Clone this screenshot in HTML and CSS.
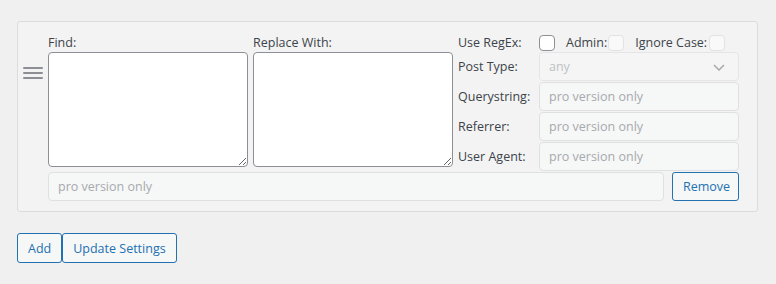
FILE: index.html
```html
<!DOCTYPE html>
<html lang="en">
<head>
    <meta charset="UTF-8">
    <meta name="viewport" content="width=device-width, initial-scale=1.0">
    <title>Rules</title>
    <link rel="stylesheet" href="styles.css">
</head>
<body>
    <div class="wrap">
        <div class="rule">
            <!-- drag handle -->
            <div class="handle">
                <svg width="20" height="12" viewBox="0 0 20 12">
                    <rect x="0" y="0" width="20" height="2" rx="1" fill="#8c8f94"/>
                    <rect x="0" y="5" width="20" height="2" rx="1" fill="#8c8f94"/>
                    <rect x="0" y="10" width="20" height="2" rx="1" fill="#8c8f94"/>
                </svg>
            </div>
            <div class="rule-body">
                <div class="rule-grid">
                    <label class="field-label find-label">Find:</label>
                    <label class="field-label replace-label">Replace With:</label>
                    <span class="side-label regex-label">Use RegEx:</span>
                    <div class="checks">
                        <input type="checkbox" class="check">
                        <span class="check-text admin-text">Admin:</span>
                        <input type="checkbox" class="check" disabled>
                        <span class="check-text case-text">Ignore Case:</span>
                        <input type="checkbox" class="check" disabled>
                    </div>

                    <textarea class="find-box"></textarea>
                    <textarea class="replace-box"></textarea>

                    <span class="side-label">Post Type:</span>
                    <div class="select-wrap">
                        <select disabled><option>any</option></select>
                        <svg class="chevron" width="12" height="7" viewBox="0 0 12 7">
                            <path d="M1 1l5 5 5-5" fill="none" stroke="#a7aaad" stroke-width="1.5"/>
                        </svg>
                    </div>

                    <span class="side-label">Querystring:</span>
                    <input type="text" class="pro-input" placeholder="pro version only" disabled>

                    <span class="side-label">Referrer:</span>
                    <input type="text" class="pro-input" placeholder="pro version only" disabled>

                    <span class="side-label">User Agent:</span>
                    <input type="text" class="pro-input" placeholder="pro version only" disabled>
                </div>
                <div class="bottom-row">
                    <input type="text" class="pro-input wide" placeholder="pro version only" disabled>
                    <button class="button">Remove</button>
                </div>
            </div>
        </div>

        <div class="actions">
            <button class="button">Add</button>
            <button class="button">Update Settings</button>
        </div>
    </div>
</body>
</html>
```
FILE: styles.css
```css
body {
    margin: 0;
    background-color: #f0f0f1;
    font-family: 'Open Sans', 'Noto Sans', sans-serif;
    font-size: 12.5px;
    color: #3c434a;
}

.wrap {
    padding: 21px 18px 0 17px;
}

.rule {
    display: flex;
    background-color: #f3f3f3;
    border: 1px solid #dcdcde;
    border-radius: 3px;
    padding: 11px 18px 10px 5px;
}

.handle {
    width: 20px;
    margin-right: 5px;
    padding-top: 34px;
}

.handle svg {
    display: block;
}

.rule-grid {
    display: grid;
    grid-template-columns: 200px 200px 76px 200px;
    grid-template-rows: 19px 30px 30px 30px 30px;
    column-gap: 5px;
}

.field-label {
    line-height: 19px;
}

.find-box {
    grid-column: 1;
    grid-row: 2 / 6;
}

.replace-box {
    grid-column: 2;
    grid-row: 2 / 6;
}

textarea {
    box-sizing: border-box;
    width: 200px;
    height: 115px;
    margin: 0;
    background-color: #fff;
    border: 1px solid #8c8f94;
    border-radius: 4px;
    font-family: inherit;
    font-size: 12.5px;
}

.side-label {
    grid-column: 3;
    display: flex;
    align-items: center;
    height: 29px;
}

.regex-label {
    grid-row: 1;
    height: 19px;
}

.checks {
    grid-column: 4;
    grid-row: 1;
    display: flex;
    align-items: center;
    height: 19px;
}

.check {
    appearance: none;
    box-sizing: border-box;
    width: 16px;
    height: 16px;
    margin: 1px 0 0 0;
    background-color: #fff;
    border: 1px solid #8c8f94;
    border-radius: 4px;
}

.check:disabled {
    background-color: rgba(255, 255, 255, 0.5);
    border-color: #e2e2e4;
}

.check-text {
    margin-left: 11px;
    margin-right: 1px;
}

.case-text {
    margin-left: 11px;
    margin-right: 2px;
}

.select-wrap {
    position: relative;
    height: 29px;
}

select,
.pro-input {
    box-sizing: border-box;
    width: 200px;
    height: 29px;
    margin: 0;
    padding: 0 9px;
    background-color: #f6f7f7;
    border: 1px solid #e0e0e2;
    border-radius: 4px;
    font-family: inherit;
    font-size: 12.5px;
    color: #a7aaad;
}

select {
    appearance: none;
}

.chevron {
    position: absolute;
    right: 14px;
    top: 12px;
}

.pro-input::placeholder {
    color: #a7aaad;
}

.bottom-row {
    display: flex;
    gap: 8px;
}

.pro-input.wide {
    flex: 1;
    width: auto;
}

.button {
    box-sizing: border-box;
    height: 30px;
    margin: 0;
    padding: 0 10px;
    background-color: #f6f7f7;
    border: 1px solid #2271b1;
    border-radius: 3px;
    color: #2271b1;
    font-family: inherit;
    font-size: 12.5px;
    cursor: pointer;
}

.bottom-row .button {
    height: 29px;
    width: 67px;
}

.actions {
    display: flex;
    margin-top: 21px;
}
```
